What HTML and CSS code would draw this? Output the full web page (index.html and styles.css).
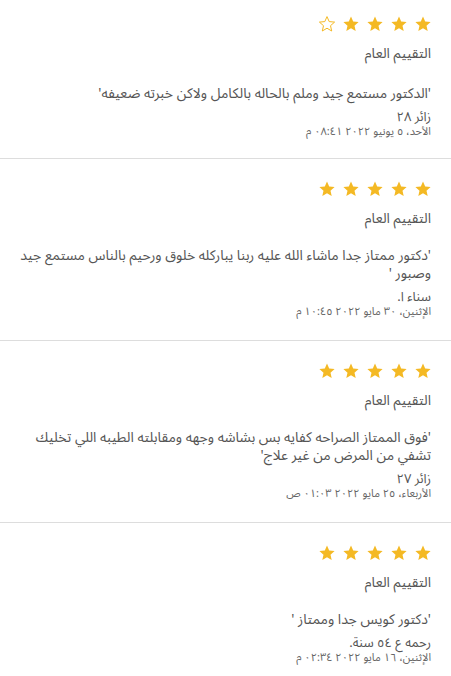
FILE: index.html
```html
<!DOCTYPE html>
<html lang="ar" dir="rtl">
<head>
<meta charset="utf-8">
<link rel="stylesheet" href="styles.css">
</head>
<body>
<svg width="0" height="0" class="defs">
  <defs>
    <polygon id="star" points="8,0.6 10.2,5.6 15.6,6.1 11.5,9.7 12.7,15 8,12.2 3.3,15 4.5,9.7 0.4,6.1 5.8,5.6"/>
  </defs>
</svg>
<div class="list">
  <section class="review first">
    <div class="stars">
      <svg class="star" viewBox="0 0 16 16"><use href="#star"/></svg>
      <svg class="star" viewBox="0 0 16 16"><use href="#star"/></svg>
      <svg class="star" viewBox="0 0 16 16"><use href="#star"/></svg>
      <svg class="star" viewBox="0 0 16 16"><use href="#star"/></svg>
      <svg class="star empty" viewBox="0 0 16 16"><use href="#star"/></svg>
    </div>
    <div class="title">التقييم العام</div>
    <p class="comment">'الدكتور مستمع جيد وملم بالحاله بالكامل ولاكن خبرته ضعيفه'</p>
    <div class="name">زائر ٢٨</div>
    <div class="date">الأحد، ٥ يونيو ٢٠٢٢ ٠٨:٤١ م</div>
  </section>
  <section class="review">
    <div class="stars">
      <svg class="star" viewBox="0 0 16 16"><use href="#star"/></svg>
      <svg class="star" viewBox="0 0 16 16"><use href="#star"/></svg>
      <svg class="star" viewBox="0 0 16 16"><use href="#star"/></svg>
      <svg class="star" viewBox="0 0 16 16"><use href="#star"/></svg>
      <svg class="star" viewBox="0 0 16 16"><use href="#star"/></svg>
    </div>
    <div class="title">التقييم العام</div>
    <p class="comment">'دكتور ممتاز جدا ماشاء الله عليه ربنا يباركله خلوق ورحيم بالناس مستمع جيد وصبور '</p>
    <div class="name">سناء ا.</div>
    <div class="date">الإثنين، ٣٠ مايو ٢٠٢٢ ١٠:٤٥ م</div>
  </section>
  <section class="review">
    <div class="stars">
      <svg class="star" viewBox="0 0 16 16"><use href="#star"/></svg>
      <svg class="star" viewBox="0 0 16 16"><use href="#star"/></svg>
      <svg class="star" viewBox="0 0 16 16"><use href="#star"/></svg>
      <svg class="star" viewBox="0 0 16 16"><use href="#star"/></svg>
      <svg class="star" viewBox="0 0 16 16"><use href="#star"/></svg>
    </div>
    <div class="title">التقييم العام</div>
    <p class="comment">'فوق الممتاز الصراحه كفايه بس بشاشه وجهه ومقابلته الطيبه اللي تخليك تشفي من المرض من غير علاج'</p>
    <div class="name">زائر ٢٧</div>
    <div class="date">الأربعاء، ٢٥ مايو ٢٠٢٢ ٠١:٠٣ ص</div>
  </section>
  <section class="review">
    <div class="stars">
      <svg class="star" viewBox="0 0 16 16"><use href="#star"/></svg>
      <svg class="star" viewBox="0 0 16 16"><use href="#star"/></svg>
      <svg class="star" viewBox="0 0 16 16"><use href="#star"/></svg>
      <svg class="star" viewBox="0 0 16 16"><use href="#star"/></svg>
      <svg class="star" viewBox="0 0 16 16"><use href="#star"/></svg>
    </div>
    <div class="title">التقييم العام</div>
    <p class="comment">'دكتور كويس جدا وممتاز '</p>
    <div class="name">رحمه ع ٥٤ سنة.</div>
    <div class="date">الإثنين، ١٦ مايو ٢٠٢٢ ٠٢:٣٤ م</div>
  </section>
</div>
</body>
</html>
```
FILE: styles.css
```css
html, body {
  margin: 0;
  padding: 0;
  background: #fff;
}
body {
  font-family: "Noto Sans Arabic", "DejaVu Sans", "Noto Sans", sans-serif;
  color: #555;
}
.defs {
  position: absolute;
  width: 0;
  height: 0;
}
.review {
  padding: 22px 20px 0 20px;
  height: 182px;
  box-sizing: border-box;
  border-bottom: 1px solid #ddd;
}
.review.first {
  margin-top: -6px;
  height: 165px;
}
.review.first .comment {
  margin-top: 21px;
}
.stars {
  display: flex;
  gap: 8px;
  height: 16px;
}
.star {
  width: 16px;
  height: 16px;
  fill: #f4b924;
}
.star.empty {
  fill: none;
  stroke: #f4b924;
  stroke-width: 1;
}
.title {
  margin-top: 12px;
  font-size: 14px;
  line-height: 20px;
  color: #555;
}
.comment {
  margin: 18px 0 0 0;
  font-size: 14px;
  line-height: 18px;
  color: #555;
}
.name {
  margin-top: 6px;
  font-size: 13px;
  line-height: 16px;
  color: #555;
}
.date {
  font-size: 11px;
  line-height: 14px;
  color: #666;
}
```
